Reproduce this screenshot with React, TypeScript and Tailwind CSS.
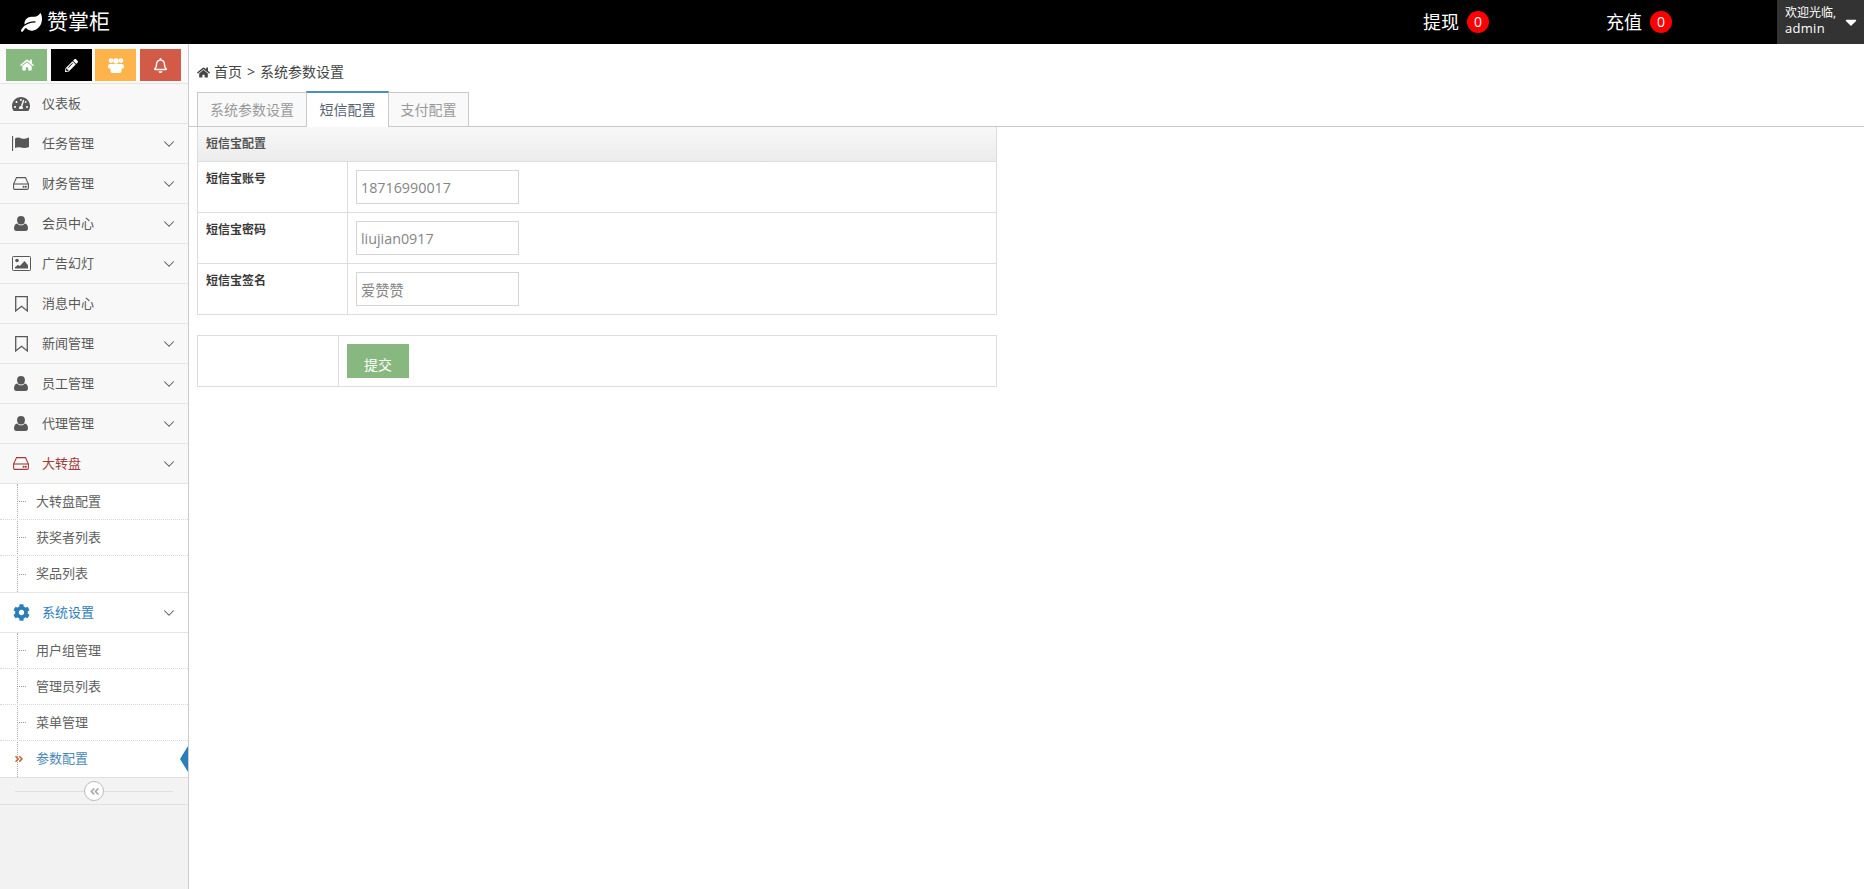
import type { ReactNode } from 'react';
import { ChevronDown } from 'lucide-react';
import {
  FaAngleDoubleLeft,
  FaAngleDoubleRight,
  FaCaretDown,
  FaCog,
  FaHome,
  FaLeaf,
  FaPencilAlt,
  FaRegBell,
  FaTachometerAlt,
} from 'react-icons/fa';

const font = "font-['Open_Sans','Noto_Sans_CJK_SC',sans-serif]";

const UserIcon = () => (
  <svg width="14" height="15" viewBox="0 0 14 15" fill="currentColor">
    <ellipse cx="7" cy="4.2" rx="3.9" ry="4.2" />
    <path d="M3.2 7.5C4.2 8.8 5.5 9.4 7 9.4s2.8-.6 3.8-1.9C12.8 7.7 14 9.5 14 12.6 14 14.2 13 15 11.7 15H2.3C1 15 0 14.2 0 12.6 0 9.5 1.2 7.7 3.2 7.5z" />
  </svg>
);

const UsersIcon = () => (
  <svg width="16" height="15" viewBox="0 0 16 15" fill="currentColor">
    <circle cx="3" cy="2.6" r="2.3" />
    <circle cx="8" cy="3" r="2.8" />
    <circle cx="13" cy="2.6" r="2.3" />
    <path d="M0 8.500c0-1.500 1-2.500 2-2.500h12c1 0 2 1 2 2.500 0 1-.5 2-1.500 2h-1V13c0 1-.8 2-1.800 2H4.300c-1 0-1.800-1-1.800-2v-2.500h-1C.5 10.500 0 9.500 0 8.500z" />
  </svg>
);

const HddIcon = () => (
  <svg width="16" height="13" viewBox="0 0 16 13" fill="none" stroke="currentColor" strokeWidth="1.1">
    <path d="M3.500.6h9L15.400 7v4a1.400 1.400 0 0 1-1.400 1.400H2A1.400 1.400 0 0 1 .6 11V7z" />
    <path d="M.6 7h14.800" />
    <circle cx="10.600" cy="9.700" r=".5" fill="currentColor" />
    <circle cx="12.800" cy="9.700" r=".5" fill="currentColor" />
  </svg>
);

const PictureIcon = () => (
  <svg width="19" height="15" viewBox="0 0 19 15" fill="none" stroke="currentColor">
    <rect x=".5" y=".5" width="18" height="14" rx=".8" />
    <circle cx="5" cy="4.500" r="1.800" fill="currentColor" stroke="none" />
    <path d="M3 12.500v-1.200l3-2.600 1.800 1.400L12.500 5 16 9.200v3.300z" fill="currentColor" stroke="none" />
  </svg>
);

const FlagIcon = () => (
  <svg width="18" height="15" viewBox="0 0 18 15" fill="currentColor">
    <rect x="0" y="0" width="1.100" height="15" />
    <path d="M3 2.500C5 1 7 1.200 9 2.200c2 1 4 .8 8-.7V11c-4 1.500-6 1.200-8 .6-2-.6-4-.6-6 .4z" />
  </svg>
);

const BookmarkIcon = () => (
  <svg width="13" height="16" viewBox="0 0 13 16" fill="none" stroke="currentColor" strokeWidth="1.300">
    <path d="M.7.7h11.600v14.200L6.500 10.300.7 14.900z" />
  </svg>
);

const MenuRow = ({
  icon,
  label,
  arrow = true,
  color = 'text-[#585858]',
  iconColor = 'text-[#585858]',
  bg = 'bg-[#f8f8f8]',
}: {
  icon: ReactNode;
  label: string;
  arrow?: boolean;
  color?: string;
  iconColor?: string;
  bg?: string;
}) => (
  <div className={`flex h-10 items-center border-b border-[#e5e5e5] ${bg}`}>
    <span className={`flex w-[42px] justify-center ${iconColor}`}>{icon}</span>
    <span className={`text-[13px] ${color}`}>{label}</span>
    {arrow && <ChevronDown className="mr-[10px] ml-auto text-[#555]" size={18} strokeWidth={1.4} />}
  </div>
);

const SubMenu = ({ items, active }: { items: string[]; active?: string }) => (
  <div className="relative bg-white">
    <div className="absolute top-0 bottom-0 left-[17px] border-l border-dotted border-[#aaaaaa]" />
    {items.map(item => (
      <div
        key={item}
        className="relative flex h-9 items-center border-b border-dotted border-[#d8d8d8] pl-[36px] last:border-b-0"
      >
        {item === active ? (
          <>
            <FaAngleDoubleRight className="absolute left-[14px] text-[#c86139]" size={10} />
            <span className="text-[13px] text-[#4b88b7]">{item}</span>
            <span className="absolute right-0 h-0 w-0 border-y-[13px] border-r-[8px] border-y-transparent border-r-[#2b7dbc]" />
          </>
        ) : (
          <>
            <span className="absolute left-[19px] w-[7px] border-t border-dotted border-[#999]" />
            <span className="text-[13px] text-[#616161]">{item}</span>
          </>
        )}
      </div>
    ))}
  </div>
);

const FormRow = ({ label, value }: { label: string; value: string }) => (
  <div className="flex h-[51px] border-b border-[#dddddd]">
    <div className="w-[150px] shrink-0 border-r border-[#dddddd] pt-[9px] pl-2 text-xs font-bold text-[#393939]">
      {label}
    </div>
    <div className="pt-2 pl-2">
      <input
        readOnly
        value={value}
        className="h-[34px] w-[163px] border border-[#d5d5d5] bg-white px-1 text-[14.3px] text-[#858585] outline-none"
      />
    </div>
  </div>
);

export default function App() {
  return (
    <div className={`flex min-h-[889px] flex-col bg-white ${font}`}>
      <header className="flex h-11 items-center bg-black text-white">
        <FaLeaf className="ml-[21px]" size={21} />
        <span className="ml-[5px] text-[21px]">赞掌柜</span>
        <div className="ml-auto flex h-full items-center">
          <span className="text-lg">提现</span>
          <span className="ml-2 flex h-[22px] w-[22px] items-center justify-center rounded-full bg-[#ff0000] text-sm">
            0
          </span>
          <span className="ml-[117px] text-lg">充值</span>
          <span className="ml-2 flex h-[22px] w-[22px] items-center justify-center rounded-full bg-[#ff0000] text-sm">
            0
          </span>
          <div className="ml-[105px] flex h-full w-[87px] items-center bg-[#333] pl-2">
            <div className="mb-[3px] w-[56px] text-[13px] leading-[15px]">
              <div className="text-xs">欢迎光临,</div>
              <div className="tracking-[0.3px]">admin</div>
            </div>
            <FaCaretDown className="ml-[1px]" size={18} />
          </div>
        </div>
      </header>

      <div className="flex flex-1">
        <aside className="flex w-[189px] shrink-0 flex-col border-r border-[#cccccc] bg-[#f2f2f2]">
          <div className="flex h-10 gap-[3.5px] border-b border-[#e5e5e5] bg-[#fafafa] pt-[5px] pl-[6px]">
            <span className="flex h-8 w-[41px] items-center justify-center bg-[#87b87f] text-white">
              <FaHome size={14} />
            </span>
            <span className="flex h-8 w-[41px] items-center justify-center bg-black text-white">
              <FaPencilAlt size={13} />
            </span>
            <span className="flex h-8 w-[41px] items-center justify-center bg-[#ffb44b] text-white">
              <UsersIcon />
            </span>
            <span className="flex h-8 w-[41px] items-center justify-center bg-[#d15b47] text-white">
              <FaRegBell size={15} />
            </span>
          </div>
          <MenuRow icon={<FaTachometerAlt size={18} />} label="仪表板" arrow={false} />
          <MenuRow icon={<FlagIcon />} label="任务管理" />
          <MenuRow icon={<HddIcon />} label="财务管理" />
          <MenuRow icon={<UserIcon />} label="会员中心" />
          <MenuRow icon={<PictureIcon />} label="广告幻灯" />
          <MenuRow icon={<BookmarkIcon />} label="消息中心" arrow={false} />
          <MenuRow icon={<BookmarkIcon />} label="新闻管理" />
          <MenuRow icon={<UserIcon />} label="员工管理" />
          <MenuRow icon={<UserIcon />} label="代理管理" />
          <MenuRow
            icon={<HddIcon />}
            label="大转盘"
            color="text-[#a23b3b]"
            iconColor="text-[#a23b3b]"
          />
          <SubMenu items={['大转盘配置', '获奖者列表', '奖品列表']} />
          <div className="border-t border-[#e5e5e5]">
            <MenuRow
              icon={<FaCog size={17} />}
              label="系统设置"
              color="text-[#2b7dbc]"
              iconColor="text-[#2b7dbc]"
              bg="bg-white"
            />
          </div>
          <SubMenu items={['用户组管理', '管理员列表', '菜单管理', '参数配置']} active="参数配置" />
          <div className="relative flex h-[28px] items-center justify-center border-y border-[#e0e0e0] bg-[#f3f3f3]">
            <div className="absolute right-[15px] left-[15px] border-t border-[#e0e0e0]" />
            <span className="relative flex h-5 w-5 items-center justify-center rounded-full border border-[#bbbbbb] bg-white text-[#aaaaaa]">
              <FaAngleDoubleLeft size={11} />
            </span>
          </div>
        </aside>

        <main className="min-w-0 flex-1">
          <div className="flex h-[48px] items-center pt-[8px] pl-[8px] text-sm text-[#444]">
            <FaHome size={13} />
            <span className="ml-[4px]">首页</span>
            <span className="mx-[5px]">&gt;</span>
            <span>系统参数设置</span>
          </div>
          <div className="flex h-[35px] items-end border-b border-[#c9c9c9] pl-[8px] text-sm">
            <span className="flex h-[34px] w-[110px] items-center justify-center border border-b-0 border-[#c9c9c9] bg-[#f9f9f9] text-[#999]">
              系统参数设置
            </span>
            <span className="relative -mb-px -ml-px flex h-[36px] w-[83px] items-center justify-center border-x border-t-2 border-[#c9c9c9] border-t-[#4c8fbd] bg-white text-[#576373]">
              短信配置
            </span>
            <span className="-ml-px flex h-[34px] w-[81px] items-center justify-center border border-b-0 border-[#c9c9c9] bg-[#f9f9f9] text-[#999]">
              支付配置
            </span>
          </div>

          <div className="ml-[8px] w-[800px] border-x border-[#dddddd]">
            <div className="flex h-[35px] items-center border-b border-[#dddddd] bg-gradient-to-b from-[#f8f8f8] to-[#ececec] pl-2 text-xs font-bold text-[#555]">
              短信宝配置
            </div>
            <FormRow label="短信宝账号" value="18716990017" />
            <FormRow label="短信宝密码" value="liujian0917" />
            <FormRow label="短信宝签名" value="爱赞赞" />
          </div>

          <div className="mt-[20px] ml-[8px] flex h-[52px] w-[800px] border border-[#dddddd]">
            <div className="w-[141px] shrink-0 border-r border-[#dddddd]" />
            <div className="pt-2 pl-2">
              <button className="h-[34px] w-[62px] bg-[#87b87f] pt-[8px] text-sm text-white">
                提交
              </button>
            </div>
          </div>
        </main>
      </div>
    </div>
  );
}
